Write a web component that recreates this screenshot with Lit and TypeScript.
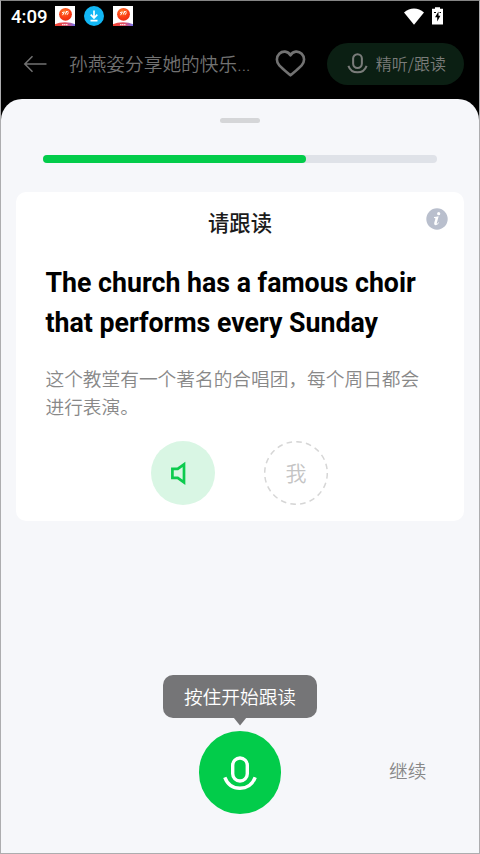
import { LitElement, html, css } from "lit";
import { customElement, property } from "lit/decorators.js";

@customElement("mic-icon")
class MicIcon extends LitElement {
  static styles = css`
    :host { display: block; }
    svg { display: block; width: 100%; height: 100%; }
  `;
  render() {
    return html`<svg viewBox="0 0 34 35" fill="none" stroke="currentColor" stroke-width="3.4">
      <rect x="9.700" y="2" width="14.600" height="23" rx="7.300" />
      <path d="M1.800 21.300C4.500 28.500 10 32.200 17 32.200S29.500 28.500 32.200 21.300" />
    </svg>`;
  }
}

@customElement("news-badge")
class NewsBadge extends LitElement {
  static styles = css`
    :host { display: block; width: 20px; height: 20px; }
    svg { display: block; }
  `;
  render() {
    return html`<svg width="20" height="20" viewBox="0 0 20 20">
      <defs>
        <radialGradient id="ball" cx=".42" cy=".3" r=".75">
          <stop offset="0" stop-color="#ff7a2a" />
          <stop offset=".6" stop-color="#fb3d13" />
          <stop offset="1" stop-color="#e92a12" />
        </radialGradient>
        <linearGradient id="base">
          <stop offset="0" stop-color="#f5422c" />
          <stop offset=".6" stop-color="#e0506c" />
          <stop offset="1" stop-color="#6d6ff0" />
        </linearGradient>
      </defs>
      <rect width="20" height="20" fill="#fff" />
      <path d="M0 20V18.200C5 15.500 15 15.500 20 18.200V20Z" fill="url(#base)" />
      <circle cx="10.500" cy="8.300" r="6.400" fill="url(#ball)" />
      <path d="M7 6.800l1.800-.8M7.500 9.200l2-3.500M10.300 8.500l1.300-3.500M11 6.500l2.400-1.300M12 8.800l1.500-2.300" stroke="#fff" stroke-width="1" fill="none" />
      <path d="M7 18.700h6" stroke="#fff" stroke-width="1" stroke-dasharray="1.500 .4" />
    </svg>`;
  }
}

@customElement("status-bar")
class StatusBar extends LitElement {
  static styles = css`
    :host {
      display: flex; align-items: center; height: 30px; box-sizing: border-box;
      padding: 0 36px 0 10px; color: #fff;
    }
    .time { width: 43.500px; padding-top: 1px; font: 500 18.600px/30px Roboto, sans-serif; }
    .icons { display: flex; gap: 9.300px; }
    .right { display: flex; align-items: center; gap: 8px; margin-left: auto; }
    svg { display: block; }
  `;
  render() {
    return html`
      <div class="time">4:09</div>
      <div class="icons">
        <news-badge></news-badge>
        <svg width="20" height="20" viewBox="0 0 20 20">
          <circle cx="10" cy="10" r="10" fill="#12b7f5" />
          <path d="M10 4.500v7M6.700 8.700L10 12l3.300-3.300M6.500 14.600h7" fill="none" stroke="#fff" stroke-width="1.700" />
        </svg>
        <news-badge></news-badge>
      </div>
      <div class="right">
        <svg width="20" height="17" viewBox="0 0 20 17">
          <path d="M0 4.500C6-1 14-1 20 4.500L10 16.700Z" fill="#fff" />
        </svg>
        <svg width="11" height="18" viewBox="0 0 11 18">
          <path d="M0 1.800h3V.300h5v1.500h3v15.700H0Z" fill="#fff" />
          <path d="M6.500 4.500L3 10.300h2.200v4.200l3.200-5.700H6.500ZM2 5h2v.9H2ZM7.500 5h1.500v.9H7.500Z" fill="#000" />
        </svg>
      </div>
    `;
  }
}

@customElement("page-header")
class PageHeader extends LitElement {
  static styles = css`
    :host {
      display: flex; align-items: center; height: 67px; box-sizing: border-box;
      padding: 0 15px 2px 22px; color: #727272;
      font-family: "Noto Sans CJK SC", sans-serif; font-weight: 350;
    }
    svg { display: block; }
    .title { margin-left: 22px; width: 206.500px; font-size: 18.700px; line-height: 28px; white-space: nowrap; }
    .dots { font-family: Roboto, sans-serif; }
    .practice {
      margin-left: 21px; width: 137px; height: 42px; border-radius: 21px; box-sizing: border-box;
      padding-left: 20px; display: flex; align-items: center; gap: 7.500px;
      background: #0b1f13; font-size: 16px; line-height: 24px; white-space: nowrap; color: #7a7c7a;
    }
    .practice span { margin-top: -1px; }
    mic-icon { width: 21px; height: 21px; }
  `;
  render() {
    return html`
      <svg width="24" height="18" viewBox="0 0 24 18" fill="none" stroke="currentColor" stroke-width="1.500">
        <path d="M23.500 9H2M9.500 1.300L1.800 9l7.700 7.700" />
      </svg>
      <div class="title">孙燕姿分享她的快乐<span class="dots">...</span></div>
      <svg width="31" height="28" viewBox="0 0 31 28" fill="none" stroke="currentColor" stroke-width="2.600" stroke-linejoin="round">
        <path d="M15.500 5.300C13 .700 7.500.600 4.300 3.700C1 7 1.200 12 4.300 15.300C7.800 19 12 22.300 15.500 25.300C19 22.300 23.200 19 26.700 15.300C29.800 12 30 7 26.700 3.700C23.500.600 18 .700 15.500 5.300Z" />
      </svg>
      <div class="practice"><mic-icon></mic-icon><span>精听/跟读</span></div>
    `;
  }
}

@customElement("practice-card")
class PracticeCard extends LitElement {
  static styles = css`
    :host {
      display: block; height: 329px; box-sizing: border-box; padding: 15px 16px 0 29.500px;
      border-radius: 10px; background: #fff; font-family: "Noto Sans CJK SC", sans-serif;
    }
    .head { display: grid; grid-template-columns: 8.500px 1fr 22px; }
    .head h2 { grid-column: 2; margin: 0; font-size: 21.300px; line-height: 30px; font-weight: 500; color: #1b1b1b; text-align: center; }
    .info { display: block; margin-top: 1px; }
    .sentence {
      margin: 25.500px 0 0; font: 700 26.730px/40px Roboto, sans-serif; color: #000; white-space: nowrap;
    }
    .translation { margin: 21px 0 0; font-size: 18.700px; line-height: 28.500px; font-weight: 350; color: #888; white-space: nowrap; }
    .voices { display: flex; gap: 49px; margin: 20px 0 0 105.500px; }
    .play { width: 64px; height: 64px; border-radius: 50%; background: #d9f6e4; }
    .me { display: grid; place-items: center; width: 64px; height: 64px; }
    .me > * { grid-area: 1 / 1; }
    .me span { margin-top: -1px; font-size: 21px; line-height: 30px; color: #c4c4c4; font-weight: 350; }
    svg { display: block; }
  `;
  render() {
    return html`
      <div class="head">
        <h2>请跟读</h2>
        <svg class="info" width="22" height="22" viewBox="0 0 22 22">
          <circle cx="11" cy="11" r="10.700" fill="#b9bfcd" />
          <circle cx="12.700" cy="5.700" r="1.600" fill="#fff" />
          <path d="M8 9.100q2.200-.2 4.400-.9l.2.200-1.800 6.500q-.2.900.4.700q.6-.3 1.400-1.400l.6.400q-1.700 2.700-3.700 2.600q-1.800-.1-1.300-2.100l1.200-4.400q.2-.9-1.400-.8Z" fill="#fff" />
        </svg>
      </div>
      <p class="sentence">The church has a famous choir<br />that performs every Sunday</p>
      <p class="translation">这个教堂有一个著名的合唱团，每个周日都会<br />进行表演。</p>
      <div class="voices">
        <div class="play">
          <svg width="64" height="64" viewBox="0 0 64 64" fill="none" stroke="#0dcb4e" stroke-width="2.700">
            <path d="M21.400 27.800h5.300l6.300-4.500v18l-6.300-4.500h-5.300Z" />
          </svg>
        </div>
        <div class="me">
          <svg width="64" height="64" viewBox="0 0 64 64">
            <circle cx="32" cy="32" r="31.300" fill="none" stroke="#d6d6d6" stroke-width="1.500" stroke-dasharray="5.600 4.234" />
          </svg>
          <span>我</span>
        </div>
      </div>
    `;
  }
}

@customElement("app-root")
class AppRoot extends LitElement {
  @property({ type: Number }) progress = 66.7;

  static styles = css`
    :host {
      display: flex; flex-direction: column; width: 480px; height: 854px; box-sizing: border-box;
      border: 1px solid #adadaf; border-top-color: #858585; background: #000; overflow: hidden;
      font-family: "Noto Sans CJK SC", sans-serif;
    }
    .sheet {
      flex: 1; display: flex; flex-direction: column; border-radius: 21px 21px 0 0; margin-top: .5px;
      background: #f6f7fa; padding: 19px 15px 0;
    }
    .handle { width: 40px; height: 5.500px; border-radius: 3px; background: #d5d6d8; align-self: center; }
    .track { margin: 31.500px 27px 0 26.500px; height: 8px; border-radius: 4px; background: #dfe2e8; }
    .fill { height: 8px; border-radius: 4px; background: #02cc4a; }
    practice-card { margin-top: 29.500px; }
    .footer { display: grid; grid-template-columns: 1fr 155px 1fr; margin-top: 154px; }
    .record { grid-column: 2; display: flex; flex-direction: column; align-items: center; }
    .tip {
      width: 154.500px; height: 42.500px; border-radius: 10px; background: #757577; color: #fff;
      font-size: 18.700px; line-height: 42.500px; text-align: center; font-weight: 350;
    }
    .arrow { width: 13px; height: 8px; background: #757577; clip-path: polygon(0 0, 100% 0, 50% 100%); }
    .mic {
      display: grid; place-items: center; width: 82.500px; height: 82.500px; margin-top: 5.500px;
      border-radius: 50%; background: #02cc4a; color: #fff;
    }
    .mic mic-icon { width: 34px; height: 35px; margin-top: 3px; }
    .next { margin-top: 81px; margin-left: 71.500px; font-size: 18.700px; line-height: 28px; font-weight: 350; color: #888; }
  `;
  render() {
    return html`
      <status-bar></status-bar>
      <page-header></page-header>
      <main class="sheet">
        <div class="handle"></div>
        <div class="track"><div class="fill" style="width:${this.progress}%"></div></div>
        <practice-card></practice-card>
        <div class="footer">
          <div class="record">
            <div class="tip">按住开始跟读</div>
            <div class="arrow"></div>
            <div class="mic"><mic-icon></mic-icon></div>
          </div>
          <div class="next">继续</div>
        </div>
      </main>
    `;
  }
}
